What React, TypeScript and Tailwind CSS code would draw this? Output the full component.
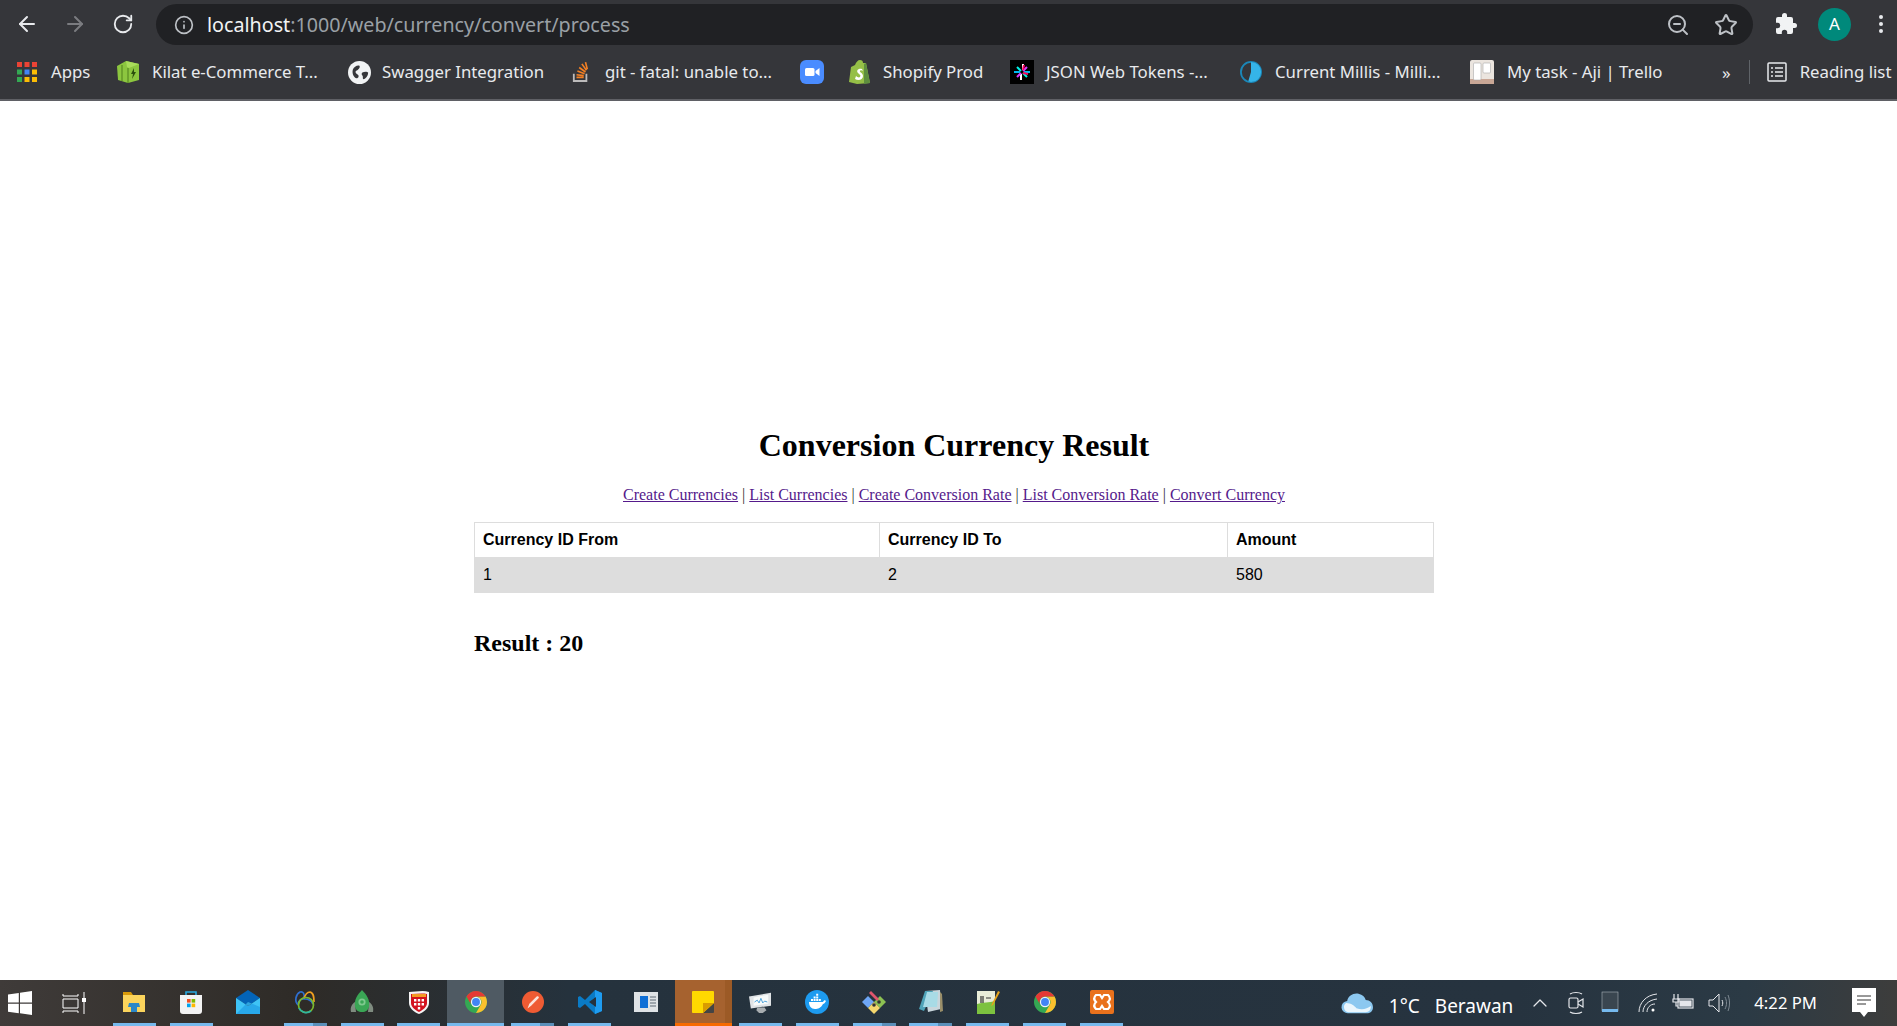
import React from 'react';
import { ArrowLeft, ArrowRight, RotateCw, Info, ZoomOut, Star, ChevronUp } from 'lucide-react';

const Chrome = () => (
  <svg viewBox="0 0 24 24" className="h-[22px] w-[22px]">
    <circle cx="12" cy="12" r="12" fill="#34a853" />
    <path d="M12 6H22.39A12 12 0 0 1 12 24L17.2 15A6 6 0 0 0 12 6Z" fill="#fbc02d" />
    <path d="M1.61 6A12 12 0 0 1 22.39 6H12A6 6 0 0 0 6.8 15Z" fill="#e53935" />
    <circle cx="12" cy="12" r="5.6" fill="#f1f3f4" />
    <circle cx="12" cy="12" r="4.3" fill="#4285f4" />
  </svg>
);

const taskApps = [
  {
    id: 'explorer',
    bar: 'single',
    icon: (
      <svg viewBox="0 0 24 24" className="h-[24px] w-[24px]">
        <path d="M1 2h8l2 3H1z" fill="#d99a0a" />
        <path d="M1 5h22v17H1z" fill="#fbd45c" />
        <path d="M7 13h10l1 4h-3v5H9v-5H6z" fill="#2b87c8" />
      </svg>
    ),
  },
  {
    id: 'store',
    bar: 'single',
    icon: (
      <svg viewBox="0 0 24 24" className="h-[24px] w-[24px]">
        <path d="M7 6V2h10v4" fill="none" stroke="#26a9e0" strokeWidth="1.6" />
        <path d="M1 5h22v16a3 3 0 0 1-3 3H4a3 3 0 0 1-3-3z" fill="#f3f3f3" />
        <rect x="8" y="9" width="3.6" height="3.6" fill="#f25022" />
        <rect x="12.6" y="9" width="3.6" height="3.6" fill="#7fba00" />
        <rect x="8" y="13.6" width="3.6" height="3.6" fill="#00a4ef" />
        <rect x="12.6" y="13.6" width="3.6" height="3.6" fill="#ffb900" />
      </svg>
    ),
  },
  {
    id: 'mail',
    bar: 'none',
    icon: (
      <svg viewBox="0 0 24 24" className="h-[24px] w-[24px]">
        <path d="M0 8 12 0l12 8-12 8z" fill="#0364b8" />
        <path d="M0 8l12 8 12-8v16H0z" fill="#28a8ea" />
        <path d="M0 8l12 8 12-8v9L12 12 0 24z" fill="#50d9ff" opacity=".55" />
      </svg>
    ),
  },
  {
    id: 'navicat',
    bar: 'double',
    icon: (
      <svg viewBox="0 0 24 24" className="h-[24px] w-[24px]" fill="none" strokeWidth="1.7">
        <path d="M5 15C1 11 3 4 7 2c3-1 5 2 4 6" stroke="#2f6fd0" />
        <path d="M11 9c1-4 3-7 6-7 4 1 4 6 4 10" stroke="#f0a020" />
        <path d="M5 15c0-4 3-7 7-6 5 0 7 3 8 5" stroke="#2f6fd0" />
        <circle cx="13" cy="15" r="7.5" stroke="#7ab82e" />
        <path d="M6 18a8 8 0 0 0 12 3" stroke="#2fb5a0" />
      </svg>
    ),
  },
  {
    id: 'robo',
    bar: 'single',
    icon: (
      <svg viewBox="0 0 24 24" className="h-[24px] w-[24px]">
        <path d="M1 22c-1-5 1-8 4-10l1 10zM23 22c1-5-1-8-4-10l-1 10z" fill="#7f8c80" />
        <path d="M12 0c5 5 8 10 7 17-1 3-3 5-7 5s-6-2-7-5C4 10 7 5 12 0z" fill="#3aa655" />
        <circle cx="12" cy="12" r="3.6" fill="#7fc98f" />
        <circle cx="12" cy="12" r="1.8" fill="#3aa655" />
      </svg>
    ),
  },
  {
    id: 'shield',
    bar: 'single',
    icon: (
      <svg viewBox="0 0 24 24" className="h-[24px] w-[24px]">
        <path d="M2 2c6 0 14-2 20 0v11c0 5-5 9-10 11C7 22 2 18 2 13z" fill="#f4f4f4" />
        <path d="M4 4c5 0 11-1 16 0v9c0 4-4 7-8 9-4-2-8-5-8-9z" fill="#d3121e" />
        <path d="M5 4h14v3H5z" fill="#f59a23" />
        <path d="M7 9h2.400v2.400H7zM10.800 9h2.400v2.400h-2.400zM14.600 9H17v2.400h-2.400zM7 13h2.400v2.400H7zM10.800 13h2.400v2.400h-2.400zM14.600 13H17v2.400h-2.400zM10.800 17h2.400v2.400h-2.400z" fill="#fff" />
      </svg>
    ),
  },
  { id: 'chrome-active', bar: 'active', icon: <Chrome /> },
  {
    id: 'postman',
    bar: 'double',
    icon: (
      <svg viewBox="0 0 24 24" className="h-[22px] w-[22px]">
        <circle cx="12" cy="12" r="12" fill="#ef5b33" />
        <path d="M6 19l2-5 8-8c2-1 3 1 2 2l-8 8z" fill="#fbe3da" />
      </svg>
    ),
  },
  {
    id: 'vscode',
    bar: 'single',
    icon: (
      <svg viewBox="0 0 24 24" className="h-[24px] w-[24px]">
        <path d="M17 0 7 10 2 6 0 7v10l2 1 5-4 10 10 7-3V3zM18 7v10l-7-5z" fill="#0a7bc6" fillRule="evenodd" />
        <path d="M17 0l7 3v18l-7 3z" fill="#1f9cf0" />
        <path d="M18 7v10l-2-1.500V8.500z" fill="#26323d" />
      </svg>
    ),
  },
  {
    id: 'window',
    bar: 'none',
    icon: (
      <svg viewBox="0 0 24 24" className="h-[24px] w-[24px]">
        <rect x="0" y="2" width="24" height="20" fill="#dfe3e6" />
        <rect x="6" y="6" width="8" height="12" fill="#0f6fd6" />
        <path d="M16 7h6M16 10h6M16 13h6M16 16h6" stroke="#5f6b75" strokeWidth="1.200" />
      </svg>
    ),
  },
  {
    id: 'sticky',
    bar: 'sticky',
    icon: (
      <svg viewBox="0 0 24 24" className="h-[22px] w-[22px]">
        <path d="M1 0h22a1 1 0 0 1 1 1v14l-9 9H1a1 1 0 0 1-1-1V1a1 1 0 0 1 1-1z" fill="#ffd800" />
        <path d="M24 13v10a1 1 0 0 1-1 1H12z" fill="#444" />
        <path d="M24 13 12 24V13z" fill="#d99c00" />
      </svg>
    ),
  },
  {
    id: 'monitor',
    bar: 'single',
    icon: (
      <svg viewBox="0 0 24 24" className="h-[22px] w-[22px]">
        <path d="M0 6l24-4v14L2 19z" fill="#dfe3e6" />
        <path d="M5 7l16-3v10L5 16z" fill="#f7fafa" />
        <path d="M6 12l3-2 2 3 2-5 2 5 2-2 3 1" fill="none" stroke="#3f9ad6" strokeWidth="1" />
        <path d="M9 18h8l2 3-4 3h-4l-3-3z" fill="#a8adb0" />
      </svg>
    ),
  },
  {
    id: 'docker',
    bar: 'single',
    icon: (
      <svg viewBox="0 0 24 24" className="h-[24px] w-[24px]">
        <circle cx="12" cy="12" r="12" fill="#1d9bf0" />
        <path d="M4 12h14c1-2 2-2 3-1-1 2-2 3-3 3-2 4-5 5-8 5-4 0-6-3-6-7z" fill="#fff" />
        <path d="M6 9h2v2H6zM8.600 9h2v2h-2zM11.200 9h2v2h-2zM8.600 6.400h2v2h-2zM11.200 6.400h2v2h-2zM11.200 3.800h2v2h-2zM13.800 9h2v2h-2z" fill="#fff" />
      </svg>
    ),
  },
  {
    id: 'git',
    bar: 'double',
    icon: (
      <svg viewBox="0 0 24 24" className="h-[24px] w-[24px]">
        <path d="M0 12l6-6 6 6-6 6z" fill="#6ea6f5" />
        <path d="M12 12l6-6 6 6-6 6z" fill="#8cc152" />
        <path d="M6 18l6-6 6 6-6 6z" fill="#f5d76e" />
        <path d="M7 3l2-2 8 8-2 2z" fill="#e0556d" />
        <circle cx="12" cy="15" r="1.800" fill="#333" />
        <circle cx="17" cy="12" r="1.800" fill="#333" />
      </svg>
    ),
  },
  {
    id: 'notepad',
    bar: 'double',
    icon: (
      <svg viewBox="0 0 24 24" className="h-[24px] w-[24px]">
        <path d="M6 1l15-1 1 19-13 3z" fill="#c9d6dc" />
        <path d="M6 1l8 0-9 20-5-2z" fill="#4fa3b8" />
        <path d="M8 2h11l-1 15H4z" fill="#a8dbe6" />
        <path d="M21 2l2 2 1 17-3 1z" fill="#9a8f6a" />
      </svg>
    ),
  },
  {
    id: 'notepadpp',
    bar: 'single',
    icon: (
      <svg viewBox="0 0 24 24" className="h-[24px] w-[24px]">
        <path d="M1 1h18v23H1z" fill="#e8ecd8" />
        <path d="M1 14c6-2 12-1 18-3v13H1z" fill="#7cc23f" />
        <path d="M5 6v7M7 6v7M10 8h5" stroke="#333" strokeWidth="1.200" />
        <path d="M22 1l2 1-7 13-2 1z" fill="#e5a21a" />
      </svg>
    ),
  },
  { id: 'chrome', bar: 'single', icon: <Chrome /> },
  {
    id: 'xampp',
    bar: 'single',
    icon: (
      <svg viewBox="0 0 24 24" className="h-[24px] w-[24px]">
        <rect width="24" height="24" rx="2" fill="#e9711c" />
        <path d="M6 5h4l2 3 2-3h4c3 3 2 5 0 7 2 2 3 4 0 7h-4l-2-3-2 3H6c-3-3-2-5 0-7-2-2-3-4 0-7z" fill="none" stroke="#fff" strokeWidth="2.200" />
      </svg>
    ),
  },
];

const bookmarks = [
  {
    title: 'Apps',
    width: 'w-[40px]',
    gap: 'ml-0',
    textGap: 'ml-[14px]',
    icon: (
      <svg viewBox="0 0 20 20" className="h-5 w-5">
        <path d="M0 0h5v5H0zM7.500 0h5v5h-5zM15 0h5v5h-5z" fill="#ea4335" />
        <path d="M0 7.500h5v5H0z" fill="#34a853" />
        <path d="M7.500 7.500h5v5h-5z" fill="#4285f4" />
        <path d="M15 7.500h5v5h-5z" fill="#fbbc05" />
        <path d="M0 15h5v5H0z" fill="#34a853" />
        <path d="M7.500 15h5v5h-5zM15 15h5v5h-5z" fill="#fbbc05" />
      </svg>
    ),
  },
  {
    title: 'Kilat e-Commerce T...',
    width: 'w-[169px]',
    gap: 'ml-[25px]',
    textGap: 'ml-[12px]',
    icon: (
      <svg viewBox="0 0 24 24" className="h-6 w-6">
        <path d="M1 6l9-5 13 3v16l-11 3-10-3z" fill="#8cc63f" />
        <path d="M10 1l13 3-10 4-2-1z" fill="#a9dc5b" />
        <path d="M6 5v16M12 8v15" stroke="#4f7f1c" strokeWidth="1" />
        <path d="M18 8l-3 6h2l-1 5 4-7h-2z" fill="#2c4f0e" />
      </svg>
    ),
  },
  {
    title: 'Swagger Integration',
    width: 'w-[161px]',
    gap: 'ml-[27px]',
    textGap: 'ml-[11px]',
    icon: (
      <svg viewBox="0 0 24 24" className="h-[23px] w-[23px]">
        <circle cx="12" cy="12" r="12" fill="#f1f3f4" />
        <path d="M5 9c1-3 5-5 7-4 1 2-1 4-3 5s-1 3 1 4 1 4-1 4c-3-1-5-5-4-9zM15 12c2-1 5-1 6 0 0 4-3 7-5 7-1-1 0-3-1-4s-1-2 0-3z" fill="#35363a" />
      </svg>
    ),
  },
  {
    title: 'git - fatal: unable to...',
    width: 'w-[170px]',
    gap: 'ml-[29px]',
    textGap: 'ml-[15px]',
    icon: (
      <svg viewBox="0 0 20 24" className="h-[24px] w-[18px]">
        <path d="M2 14v8h14v-8" fill="none" stroke="#bcbbbb" strokeWidth="2" />
        <path d="M5 18h8M5 15l8 1M6 11l8 3M8 7l7 5M11 3l5 7M15 1l2 8" stroke="#f48024" strokeWidth="1.800" />
      </svg>
    ),
  },
  {
    title: '',
    width: 'w-0',
    gap: 'ml-[25px]',
    textGap: 'ml-0',
    icon: (
      <svg viewBox="0 0 24 24" className="h-6 w-6">
        <rect width="24" height="24" rx="6" fill="#4a8cff" />
        <rect x="5" y="8" width="9.500" height="8" rx="1.500" fill="#fff" />
        <path d="M15.500 11l4-3v8l-4-3z" fill="#fff" />
      </svg>
    ),
  },
  {
    title: 'Shopify Prod',
    width: 'w-[103px]',
    gap: 'ml-[25px]',
    textGap: 'ml-[12px]',
    icon: (
      <svg viewBox="0 0 22 24" className="h-6 w-[22px]">
        <path d="M2 7l4-2c1-3 3-5 5-5 2 0 3 1 3 3l3 0 4 20-13 1-8-2z" fill="#95bf47" />
        <path d="M15 4l2-1 4 20-6 1z" fill="#5e8e3e" />
        <path d="M13 9c-4-1-6 2-4 4s3 2 2 4c-1 1-3 0-4-1l-1 3c3 2 8 1 8-3 0-3-4-4-3-5 0-1 2-1 3 0z" fill="#fff" />
      </svg>
    ),
  },
  {
    title: 'JSON Web Tokens -...',
    width: 'w-[169px]',
    gap: 'ml-[24px]',
    textGap: 'ml-[12px]',
    icon: (
      <svg viewBox="0 0 24 24" className="h-6 w-6">
        <rect width="24" height="24" fill="#000" />
        <path d="M13 4v6M11 20v-6" stroke="#fff" strokeWidth="2" />
        <path d="M7 7l4 4M17 17l-4-4" stroke="#00f2e6" strokeWidth="2" />
        <path d="M4 12h6M20 12h-6" stroke="#00b9f1" strokeWidth="2" />
        <path d="M17 7l-4 4M7 17l4-4" stroke="#d63aff" strokeWidth="2" />
        <path d="M14 5l-1 5M18 14l-5-1" stroke="#fb015b" strokeWidth="2" />
      </svg>
    ),
  },
  {
    title: 'Current Millis - Milli...',
    width: 'w-[171px]',
    gap: 'ml-[25px]',
    textGap: 'ml-[13px]',
    icon: (
      <svg viewBox="0 0 24 24" className="h-[22px] w-[22px]">
        <circle cx="12" cy="12" r="11" fill="none" stroke="#1b87b8" strokeWidth="2" />
        <path d="M12 1a11 11 0 0 1 0 22l-3-1 3-10z" fill="#35b4e8" />
      </svg>
    ),
  },
  {
    title: 'My task - Aji | Trello',
    width: 'w-[155px]',
    gap: 'ml-[24px]',
    textGap: 'ml-[13px]',
    icon: (
      <svg viewBox="0 0 24 24" className="h-6 w-6">
        <rect width="24" height="24" rx="2" fill="#ebe5df" />
        <path d="M0 19h24v5H0z" fill="#c9a796" />
        <rect x="3.500" y="3" width="7.500" height="17" rx="1" fill="#fff" stroke="#aaa" strokeWidth=".6" />
        <rect x="13" y="3" width="7.500" height="10" rx="1" fill="#fff" stroke="#aaa" strokeWidth=".6" />
      </svg>
    ),
  },
];

function Browser() {
  return (
    <div className="h-[101px] shrink-0 border-b-2 border-[#5f6065] bg-[#35363a] text-white">
      <div className="flex h-[49px] items-start">
        <div className="flex h-[48px] w-[156px] items-center pl-[15px]">
          <ArrowLeft className="h-[24px] w-[24px] text-[#e8eaed]" />
          <ArrowRight className="ml-[24px] h-[24px] w-[24px] text-[#7b7c80]" />
          <RotateCw className="ml-[25px] h-[22px] w-[22px] text-[#e8eaed]" />
        </div>
        <div className="mt-[4px] flex h-[41px] w-[1597px] items-center rounded-full bg-[#202124] pl-[18px] pr-[15px]">
          <Info className="h-[20px] w-[20px] text-[#bdc1c6]" />
          <div className="ml-[13px] flex-1 whitespace-nowrap font-['Noto_Sans',sans-serif] text-[19.700px] text-[#9aa0a6]">
            <span className="text-[#f1f3f4]">localhost</span>:1000/web/currency/convert/process
          </div>
          <ZoomOut className="h-[24px] w-[24px] text-[#bdc1c6]" />
          <Star className="ml-[24px] h-[24px] w-[24px] text-[#bdc1c6]" />
        </div>
        <div className="flex h-[48px] flex-1 items-center pl-[21px]">
          <svg viewBox="0 0 24 24" className="h-[24px] w-[24px]" fill="#f1f3f4">
            <path d="M20.500 11H19V7a2 2 0 0 0-2-2h-4V3.500a2.500 2.500 0 0 0-5 0V5H4a2 2 0 0 0-2 2v3.800h1.500a2.700 2.700 0 0 1 0 5.400H2V20a2 2 0 0 0 2 2h3.800v-1.500a2.700 2.700 0 0 1 5.400 0V22H17a2 2 0 0 0 2-2v-4h1.500a2.500 2.500 0 0 0 0-5z" />
          </svg>
          <div className="ml-[20px] flex h-[33px] w-[33px] shrink-0 items-center justify-center rounded-full bg-[#00897b] font-['Noto_Sans',sans-serif] text-[17px]">
            A
          </div>
          <div className="ml-[28px] flex flex-col gap-[3px]">
            <span className="h-[4px] w-[4px] rounded-full bg-[#e8eaed]" />
            <span className="h-[4px] w-[4px] rounded-full bg-[#e8eaed]" />
            <span className="h-[4px] w-[4px] rounded-full bg-[#e8eaed]" />
          </div>
        </div>
      </div>
      <div className="flex h-[46px] items-center pl-[17px] font-['Noto_Sans',sans-serif] text-[16.800px] text-[#e8eaed]">
        {bookmarks.map((item) => (
          <div key={item.title || 'zoom'} className={`flex shrink-0 items-center ${item.gap}`}>
            {item.icon}
            {item.title && <span className={`whitespace-nowrap ${item.textGap} ${item.width}`}>{item.title}</span>}
          </div>
        ))}
        <span className="ml-[60px] text-[17px] leading-none">»</span>
        <div className="ml-[18px] h-[24px] w-px bg-[#5f6368]" />
        <svg viewBox="0 0 20 20" className="ml-[17px] h-[20px] w-[20px]" fill="none" stroke="#e8eaed" strokeWidth="1.500">
          <rect x="1" y="1" width="18" height="18" rx="1" />
          <path d="M4 6h2M4 10h2M4 14h2M8 6h8M8 10h8M8 14h8" />
        </svg>
        <span className="ml-[13px] whitespace-nowrap">Reading list</span>
      </div>
    </div>
  );
}

function Page() {
  return (
    <main className="flex-1 bg-white pt-[326px]">
      <div className="ml-[474px] w-[960px] font-['Liberation_Serif',serif] text-black">
        <h1 className="text-center text-[32px] leading-[37px] font-bold">Conversion Currency Result</h1>
        <p className="mt-[22px] text-center text-[16px] leading-[18px] text-[#333]">
          <a href="#" className="text-[#551a8b] underline">Create Currencies</a> |{' '}
          <a href="#" className="text-[#551a8b] underline">List Currencies</a> |{' '}
          <a href="#" className="text-[#551a8b] underline">Create Conversion Rate</a> |{' '}
          <a href="#" className="text-[#551a8b] underline">List Conversion Rate</a> |{' '}
          <a href="#" className="text-[#551a8b] underline">Convert Currency</a>
        </p>
        <table className="mt-[18px] w-full table-fixed border-collapse font-['Liberation_Sans',sans-serif] text-[16px] leading-[18px]">
          <colgroup>
            <col className="w-[405px]" />
            <col className="w-[348px]" />
            <col />
          </colgroup>
          <thead>
            <tr>
              <th className="border border-[#ddd] p-2 text-left font-bold">Currency ID From</th>
              <th className="border border-[#ddd] p-2 text-left font-bold">Currency ID To</th>
              <th className="border border-[#ddd] p-2 text-left font-bold">Amount</th>
            </tr>
          </thead>
          <tbody>
            <tr className="bg-[#ddd]">
              <td className="border border-[#ddd] p-2">1</td>
              <td className="border border-[#ddd] p-2">2</td>
              <td className="border border-[#ddd] p-2">580</td>
            </tr>
          </tbody>
        </table>
        <h3 className="mt-[36px] text-[24px] leading-[28px] font-bold">Result : 20</h3>
      </div>
    </main>
  );
}

function Taskbar() {
  return (
    <footer className="flex h-[46px] shrink-0 items-stretch bg-[linear-gradient(90deg,#3f3b39_0%,#2e2b27_16%,#25323d_30%,#26333f_80%,#2b3a45_92%,#3d3d3c_100%)] font-['Noto_Sans',sans-serif] text-white">
      <div className="flex w-[40px] items-center justify-center">
        <svg viewBox="0 0 24 24" className="h-[24px] w-[24px]" fill="#fff">
          <path d="M0 3.500 10.800 2v9.500H0zM12 1.800 24 0v11.500H12zM0 12.700h10.800v9.500L0 20.700zM12 12.700h12V24l-12-1.800z" />
        </svg>
      </div>
      <div className="flex w-[66px] items-center justify-center pl-[2px]">
        <svg viewBox="0 0 24 24" className="h-[24px] w-[24px]" fill="none" stroke="#fff" strokeWidth="1">
          <path d="M1 3v2h15V3M1 22v-2h15v2M1 8h15v9H1zM22 1v6M22 11v12" />
          <rect x="20.500" y="7.500" width="3" height="3" fill="#fff" />
        </svg>
      </div>
      {taskApps.map((app) => (
        <div
          key={app.id}
          className={`relative flex w-[56.900px] items-center justify-center ${
            app.bar === 'active' ? 'bg-[#4f5a63]' : app.bar === 'sticky' ? 'bg-[#a6622f]' : ''
          }`}
        >
          {app.bar === 'sticky' && <span className="absolute inset-y-0 right-0 w-[7px] bg-[#9c5a26]" />}
          <span className="relative -mt-[2px]">{app.icon}</span>
          {app.bar === 'single' && <span className="absolute bottom-0 left-[7px] h-[3px] w-[43px] bg-[#76b9ed]" />}
          {app.bar === 'active' && <span className="absolute inset-x-0 bottom-0 h-[3px] bg-[#76b9ed]" />}
          {app.bar === 'sticky' && <span className="absolute inset-x-0 bottom-0 h-[3px] bg-[#f76a00]" />}
          {app.bar === 'double' && (
            <span className="absolute bottom-0 left-[7px] flex h-[3px] w-[43px]">
              <span className="w-[29px] bg-[#76b9ed]" />
              <span className="flex-1 bg-[#5a8fb9]" />
            </span>
          )}
        </div>
      ))}
      <div className="flex flex-1 items-center justify-end text-[19px]">
        <svg viewBox="0 0 32 22" className="h-[24px] w-[33px]">
          <path d="M7 21a6 6 0 0 1-1-12c1-5 6-8 11-7 4 1 6 3 7 6 4 0 7 3 7 7s-3 6-6 6z" fill="#8cc8f0" />
          <path d="M7 20a5 5 0 0 1-2-9c5 0 8 3 10 5 5 2 10 1 14-2 0 4-2 6-5 6z" fill="#eaf6fd" />
        </svg>
        <span className="ml-[15px] whitespace-nowrap pt-[6px]">1°C</span>
        <span className="ml-[15px] whitespace-nowrap pt-[6px]">Berawan</span>
        <ChevronUp className="ml-[15px] h-[24px] w-[24px] text-[#e5e7eb]" strokeWidth={1.250} />
        <svg viewBox="0 0 20 24" className="ml-[14px] h-[24px] w-[20px]" fill="none" stroke="#e5e7eb" strokeWidth="1.200">
          <path d="M4 3c3-2 9-2 12 0M4 21c3 2 9 2 12 0" />
          <rect x="3" y="7" width="9" height="10" rx="1.500" />
          <path d="M12 11l5-3v8l-5-3" />
        </svg>
        <svg viewBox="0 0 18 24" className="ml-[15px] h-[24px] w-[18px]">
          <rect x="1" y="1" width="16" height="19" fill="#3a4650" stroke="#aab2b8" strokeWidth=".6" />
          <rect x="1" y="18" width="16" height="3" fill="#76b9ed" />
        </svg>
        <svg viewBox="0 0 20 20" className="ml-[19px] h-[20px] w-[20px]" fill="none" stroke="#e5e7eb" strokeWidth="1">
          <path d="M1 19C1 10 8 2 19 1M5 19c0-6 5-12 14-13M9 19c0-4 3-8 8-8" />
          <circle cx="15" cy="17" r="1.500" fill="#fff" stroke="none" />
        </svg>
        <svg viewBox="0 0 24 20" className="ml-[13px] h-[20px] w-[24px]" fill="none" stroke="#e5e7eb" strokeWidth="1.200">
          <path d="M3 1v5M7 1v5M2 6h6v3H2zM5 9v4h2" />
          <rect x="7" y="6" width="15" height="9" />
          <rect x="9" y="8" width="11" height="5" fill="#e5e7eb" />
        </svg>
        <svg viewBox="0 0 24 24" className="ml-[12px] h-[24px] w-[24px]" fill="none" stroke="#e5e7eb" strokeWidth="1">
          <path d="M2 9h4l6-6v18l-6-6H2z" />
          <path d="M15 9c1 2 1 4 0 6" />
          <path d="M18 6c2 4 2 8 0 12M21 4c2 5 2 11 0 16" stroke="#7f8a93" />
        </svg>
        <span className="ml-[23px] whitespace-nowrap text-[16.700px]">4:22 PM</span>
        <svg viewBox="0 0 24 30" className="ml-[35px] mr-[21px] h-[30px] w-[24px]">
          <path d="M0 0h24v24h-8l-4 5-4-5H0z" fill="#fff" />
          <path d="M5 8h14M5 12h14M5 16h9" stroke="#333" strokeWidth="1" />
        </svg>
      </div>
    </footer>
  );
}

export default function App() {
  return (
    <div className="flex h-screen flex-col overflow-hidden">
      <Browser />
      <Page />
      <Taskbar />
    </div>
  );
}
